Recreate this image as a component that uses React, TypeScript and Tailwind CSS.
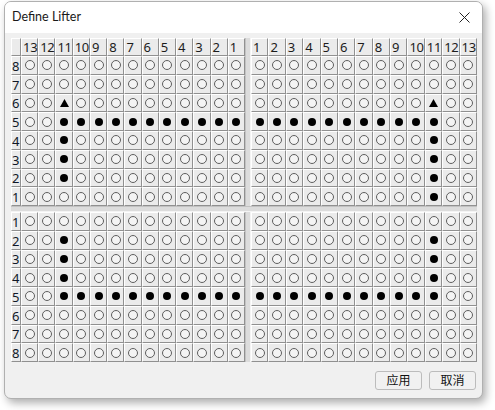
import React from 'react';

// 0 = empty circle, 1 = filled dot, 2 = triangle
const E = 0, F = 1, T = 2;

const emptyRow = () => Array(13).fill(E);
const colRow = (i: number) => emptyRow().map((_, k) => (k === i ? F : E));
const triRow = (i: number) => emptyRow().map((_, k) => (k === i ? T : E));
const lineLeft = () => emptyRow().map((_, k) => (k >= 2 ? F : E));
const lineRight = () => emptyRow().map((_, k) => (k <= 10 ? F : E));

// left half: columns 13..1, right half: columns 1..13
const topLabels = [8, 7, 6, 5, 4, 3, 2, 1];
const topLeft = [emptyRow(), emptyRow(), triRow(2), lineLeft(), colRow(2), colRow(2), colRow(2), emptyRow()];
const topRight = [emptyRow(), emptyRow(), triRow(10), lineRight(), colRow(10), colRow(10), colRow(10), colRow(10)];

const bottomLabels = [1, 2, 3, 4, 5, 6, 7, 8];
const bottomLeft = [emptyRow(), colRow(2), colRow(2), colRow(2), lineLeft(), emptyRow(), emptyRow(), emptyRow()];
const bottomRight = [emptyRow(), colRow(10), colRow(10), colRow(10), lineRight(), emptyRow(), emptyRow(), emptyRow()];

const leftHeads = [13, 12, 11, 10, 9, 8, 7, 6, 5, 4, 3, 2, 1];
const rightHeads = [1, 2, 3, 4, 5, 6, 7, 8, 9, 10, 11, 12, 13];

const btn = 'border-t border-l border-r border-b border-t-white border-l-white border-r-[#909090] border-b-[#909090] bg-[#ebebeb]';

function Cell({ v }: { v: number }) {
    return (
        <div className={`flex items-center justify-center ${btn}`}>
            {v === E && <span className="w-[10px] h-[10px] rounded-full border border-[#5e5e5e] bg-[#f4f4f4]" />}
            {v === F && <span className="w-[8px] h-[8px] rounded-full bg-black" />}
            {v === T && (
                <svg width="9" height="8" viewBox="0 0 9 8">
                    <polygon points="4.5,0 9,8 0,8" fill="#000" />
                </svg>
            )}
        </div>
    );
}

function Head({ n }: { n: number | string }) {
    return (
        <div className={`flex items-center pl-[1px] text-[13px] leading-none tracking-[-0.3px] text-[#1c1c1c] ${btn}`}>
            {n}
        </div>
    );
}

function Block({ labels, left, right }: { labels: number[]; left: number[][]; right: number[][] }) {
    return (
        <div className="flex h-[150px]">
            <div className="grid grid-rows-8 w-[10px]">
                {labels.map((l) => (
                    <div key={l} className={`flex items-end pb-[1px] text-[13px] leading-none text-[#101828] ${btn}`}>
                        {l}
                    </div>
                ))}
            </div>
            <div className="grid grid-cols-13 grid-rows-8 w-[224px]">
                {left.flatMap((row, r) => row.map((v, c) => <Cell key={`${r}-${c}`} v={v} />))}
            </div>
            <div className="w-[6px] bg-[#dcdcdc] border-l border-r border-l-[#c2c2c2] border-r-[#f4f4f4]" />
            <div className="grid grid-cols-13 grid-rows-8 w-[226px]">
                {right.flatMap((row, r) => row.map((v, c) => <Cell key={`${r}-${c}`} v={v} />))}
            </div>
        </div>
    );
}

export default function App() {
    return (
        <div className="w-[495px] h-[410px] bg-white pl-[4px] pt-[1px] font-['Noto_Sans','Noto_Sans_CJK_SC',sans-serif]">
            <div className="w-[479px] h-[398px] rounded-[7px] border border-[#b0b0b0] overflow-hidden flex flex-col bg-[#f0f0f0] shadow-[3px_4px_8px_rgba(0,0,0,0.32)]">
                {/* Title bar */}
                <div className="h-[31px] bg-white flex items-center justify-between pl-[7px] pr-[11px]">
                    <span className="font-['Lato',sans-serif] text-[12.5px] text-[#1a1a1a]">Define Lifter</span>
                    <svg width="11" height="11" viewBox="0 0 11 11" className="mr-[1px]">
                        <path d="M0.5 0.5 L10.5 10.5 M10.5 0.5 L0.5 10.5" stroke="#222" strokeWidth="1" />
                    </svg>
                </div>

                {/* Lifter grid */}
                <div className="pl-[6px] pt-[5px] flex flex-col w-[472px]">
                    <div className="flex h-[18px]">
                        <div className={`w-[10px] ${btn}`} />
                        <div className="grid grid-cols-13 w-[224px]">
                            {leftHeads.map((n) => <Head key={n} n={n} />)}
                        </div>
                        <div className="w-[6px] bg-[#dcdcdc] border-l border-r border-l-[#c2c2c2] border-r-[#f4f4f4]" />
                        <div className="grid grid-cols-13 w-[226px]">
                            {rightHeads.map((n) => <Head key={n} n={n} />)}
                        </div>
                    </div>
                    <Block labels={topLabels} left={topLeft} right={topRight} />
                    <div className="h-[6px] w-[466px] bg-[#dcdcdc] border-t border-b border-t-[#c2c2c2] border-b-[#f4f4f4]" />
                    <Block labels={bottomLabels} left={bottomLeft} right={bottomRight} />
                </div>

                {/* Footer buttons */}
                <div className="flex justify-end gap-[7px] pr-[6px] pt-[9px]">
                    <button className="w-[47px] h-[19px] rounded-[3px] border border-[#bcbcbc] bg-[#f1f1f1] text-[12px] leading-none text-[#111]">
                        应用
                    </button>
                    <button className="w-[47px] h-[19px] rounded-[3px] border border-[#bcbcbc] bg-[#f1f1f1] text-[12px] leading-none text-[#111]">
                        取消
                    </button>
                </div>
            </div>
        </div>
    );
}
